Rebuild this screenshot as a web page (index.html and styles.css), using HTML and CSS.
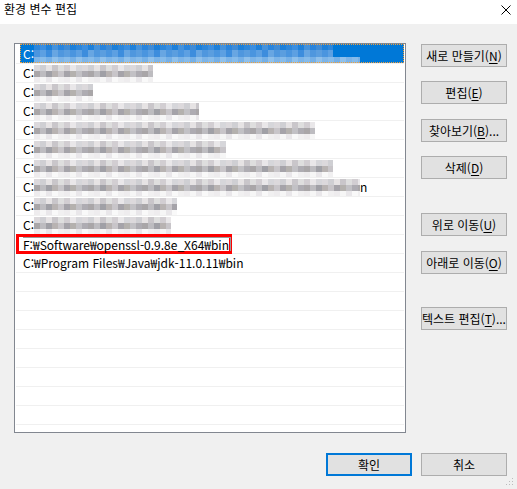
FILE: index.html
```html
<!DOCTYPE html>
<html lang="ko">
<head>
<meta charset="utf-8">
<title>환경 변수 편집</title>
<link rel="stylesheet" href="styles.css">
</head>
<body>
<div class="window">
  <div class="titlebar">
    <span class="title">환경 변수 편집</span>
    <svg class="close" width="10" height="10" viewBox="0 0 10 10"><path d="M0.5 0.5 L9.5 9.5 M9.5 0.5 L0.5 9.5" stroke="#000" stroke-width="1" fill="none"/></svg>
  </div>
  <div class="main">
    <div class="list">
      <div class="row"><div class="item sel"><span class="c">C:</span><span class="mosaic blue w326"></span></div></div>
      <div class="row"><div class="item"><span class="c">C:</span><span class="mosaic w119"></span></div></div>
      <div class="row"><div class="item"><span class="c">C:</span><span class="mosaic w59"></span></div></div>
      <div class="row"><div class="item"><span class="c">C:</span><span class="mosaic w165"></span></div></div>
      <div class="row"><div class="item"><span class="c">C:</span><span class="mosaic w281"></span></div></div>
      <div class="row"><div class="item"><span class="c">C:</span><span class="mosaic w192"></span></div></div>
      <div class="row"><div class="item"><span class="c">C:</span><span class="mosaic w299"></span></div></div>
      <div class="row"><div class="item"><span class="c">C:</span><span class="mosaic w326"></span><span>n</span></div></div>
      <div class="row"><div class="item"><span class="c">C:</span><span class="mosaic w143"></span></div></div>
      <div class="row"><div class="item"><span class="c">C:</span><span class="mosaic w137"></span></div></div>
      <div class="row"><span class="edit"><span class="edit-inner">F:₩Software₩openssl-0.9.8e_X64₩bin</span></span></div>
      <div class="row"><div class="item">C:₩Program Files₩Java₩jdk-11.0.11₩bin</div></div>
      <div class="row"></div>
      <div class="row"></div>
      <div class="row"></div>
      <div class="row"></div>
      <div class="row"></div>
      <div class="row"></div>
      <div class="row"></div>
      <div class="row"></div>
      <div class="row"></div>
    </div>
    <div class="side">
      <button class="btn b1">새로 만들기(<u>N</u>)</button>
      <button class="btn b2">편집(<u>E</u>)</button>
      <button class="btn b3">찾아보기(<u>B</u>)...</button>
      <button class="btn b4">삭제(<u>D</u>)</button>
      <button class="btn b5">위로 이동(<u>U</u>)</button>
      <button class="btn b6">아래로 이동(<u>O</u>)</button>
      <button class="btn b7">텍스트 편집(<u>T</u>)...</button>
    </div>
  </div>
  <div class="footer">
    <button class="btn default">확인</button>
    <button class="btn">취소</button>
  </div>
  <svg class="grip" width="8" height="8" viewBox="0 0 8 8">
    <rect x="6" y="0" width="1" height="1" fill="#bcbcbc"/>
    <rect x="6" y="3" width="1" height="1" fill="#bcbcbc"/>
    <rect x="3" y="3" width="1" height="1" fill="#bcbcbc"/>
    <rect x="6" y="6" width="1" height="1" fill="#bcbcbc"/>
    <rect x="3" y="6" width="1" height="1" fill="#bcbcbc"/>
    <rect x="0" y="6" width="1" height="1" fill="#bcbcbc"/>
  </svg>
</div>
</body>
</html>
```

FILE: styles.css
```css
* { box-sizing: border-box; }
html, body {
  margin: 0;
  padding: 0;
  background: #f0f0f0;
}
body {
  font-family: "Noto Sans CJK KR", "Noto Sans", sans-serif;
  font-size: 12px;
  color: #000;
}
.window {
  position: relative;
  width: 517px;
  height: 489px;
  overflow: hidden;
  background: #f0f0f0;
}
.titlebar {
  height: 24px;
  background: #fff;
  display: flex;
  align-items: flex-start;
  justify-content: space-between;
  padding: 1px 6px 0 4px;
}
.title {
  font-size: 12px;
  line-height: 16px;
}
.close {
  display: block;
  margin-top: 4px;
}
.main {
  display: flex;
  gap: 15px;
  padding: 19px 10px 0 14px;
}
.list {
  width: 392px;
  height: 390px;
  border: 1px solid #828790;
  background: #fff;
  padding-top: 1px;
  overflow: hidden;
}
.row {
  height: 19px;
  margin: 0 1px;
  border-bottom: 1px solid #f0f0f0;
  display: flex;
  line-height: 18px;
  white-space: nowrap;
}
.item {
  margin-left: 4px;
  padding-left: 3px;
  flex: 1;
  display: flex;
  align-items: stretch;
}
.item.sel {
  background: #0078d7;
  color: #fff;
  outline: 1px dotted #f2a03a;
  outline-offset: -1px;
  margin-top: -1px;
  height: 19px;
  line-height: 19px;
}
.c {
  display: inline-block;
  width: 11px;
}
.mosaic {
  display: inline-block;
  height: 18px;
  background:
    repeating-linear-gradient(90deg, #dcd9dc 0 6px, #cfcfd3 6px 12px, #e6e3e4 12px 18px, #c9c6ca 18px 24px, #dedede 24px 30px, #d2ced2 30px 36px, #e9e7e9 36px 42px, #d6d6da 42px 48px) 0 1px / 100% 6px no-repeat,
    repeating-linear-gradient(90deg, #a9a6a8 0 6px, #bdbcc0 6px 12px, #a0a0a6 12px 18px, #b8b3b2 18px 24px, #c8c5c9 24px 30px, #a5a3a9 30px 36px, #b4b1ae 36px 42px, #c2c1c5 42px 48px, #aeacb2 48px 54px) 0 7px / 100% 6px no-repeat,
    repeating-linear-gradient(90deg, #eeecee 0 6px, #f6f6f6 6px 12px, #e9e7ea 12px 18px, #f9f9f9 18px 24px, #f1f0f1 24px 30px) 0 13px / 100% 5px no-repeat;
}
.mosaic.blue {
  height: 19px;
  background:
    repeating-linear-gradient(90deg, #2d86da 0 6px, #3b8ee0 6px 12px, #1f80d9 12px 18px, #4592dc 18px 24px, #2a84dc 24px 30px, #3f8bd6 30px 36px, #1d7fd8 36px 42px) 0 0 / 299px 6px no-repeat,
    repeating-linear-gradient(90deg, #4a95df 0 6px, #5da0e2 6px 12px, #3d8ddd 12px 18px, #68a6e2 18px 24px, #4f97de 24px 30px, #5b9edf 30px 36px) 0 6px / 299px 7px no-repeat,
    repeating-linear-gradient(90deg, #7db4e7 0 6px, #86bbea 6px 12px, #76b0e6 12px 18px, #8fc0eb 18px 24px) 0 13px / 100% 6px no-repeat;
}
.w326 { width: 326px; }
.w299 { width: 299px; }
.w281 { width: 281px; }
.w192 { width: 192px; }
.w165 { width: 165px; }
.w143 { width: 143px; }
.w137 { width: 137px; }
.w119 { width: 119px; }
.w59 { width: 59px; }
.edit {
  display: block;
  width: 216px;
  height: 20px;
  margin-top: -1px;
  border: 3px solid #ff0000;
  background: #fff;
  padding-left: 4px;
  line-height: 14px;
  overflow: visible;
  position: relative;
}
.edit-inner {
  display: inline-block;
  height: 14px;
  padding-right: 1px;
  border-top: 1px solid #9a9a9a;
  border-right: 1px solid #9a9a9a;
  line-height: 13px;
}
.side {
  width: 86px;
  display: flex;
  flex-direction: column;
}
.btn {
  width: 86px;
  height: 23px;
  padding: 0;
  border: 1px solid #adadad;
  background: #e1e1e1;
  font-family: inherit;
  font-size: 12px;
  color: #000;
  line-height: 16px;
  white-space: nowrap;
  display: flex;
  align-items: center;
  justify-content: center;
  overflow: visible;
}
.btn u { text-underline-offset: 2px; }
.b1 { margin-top: 1px; }
.b2 { margin-top: 14px; }
.b3 { margin-top: 15px; }
.b4 { margin-top: 14px; }
.b5 { margin-top: 34px; }
.b6 { margin-top: 15px; }
.b7 { margin-top: 33px; }
.footer {
  display: flex;
  justify-content: flex-end;
  gap: 9px;
  padding: 20px 10px 0 0;
}
.btn.default {
  border: 2px solid #0078d7;
}
.grip {
  position: absolute;
  right: 3px;
  bottom: 3px;
}
```
